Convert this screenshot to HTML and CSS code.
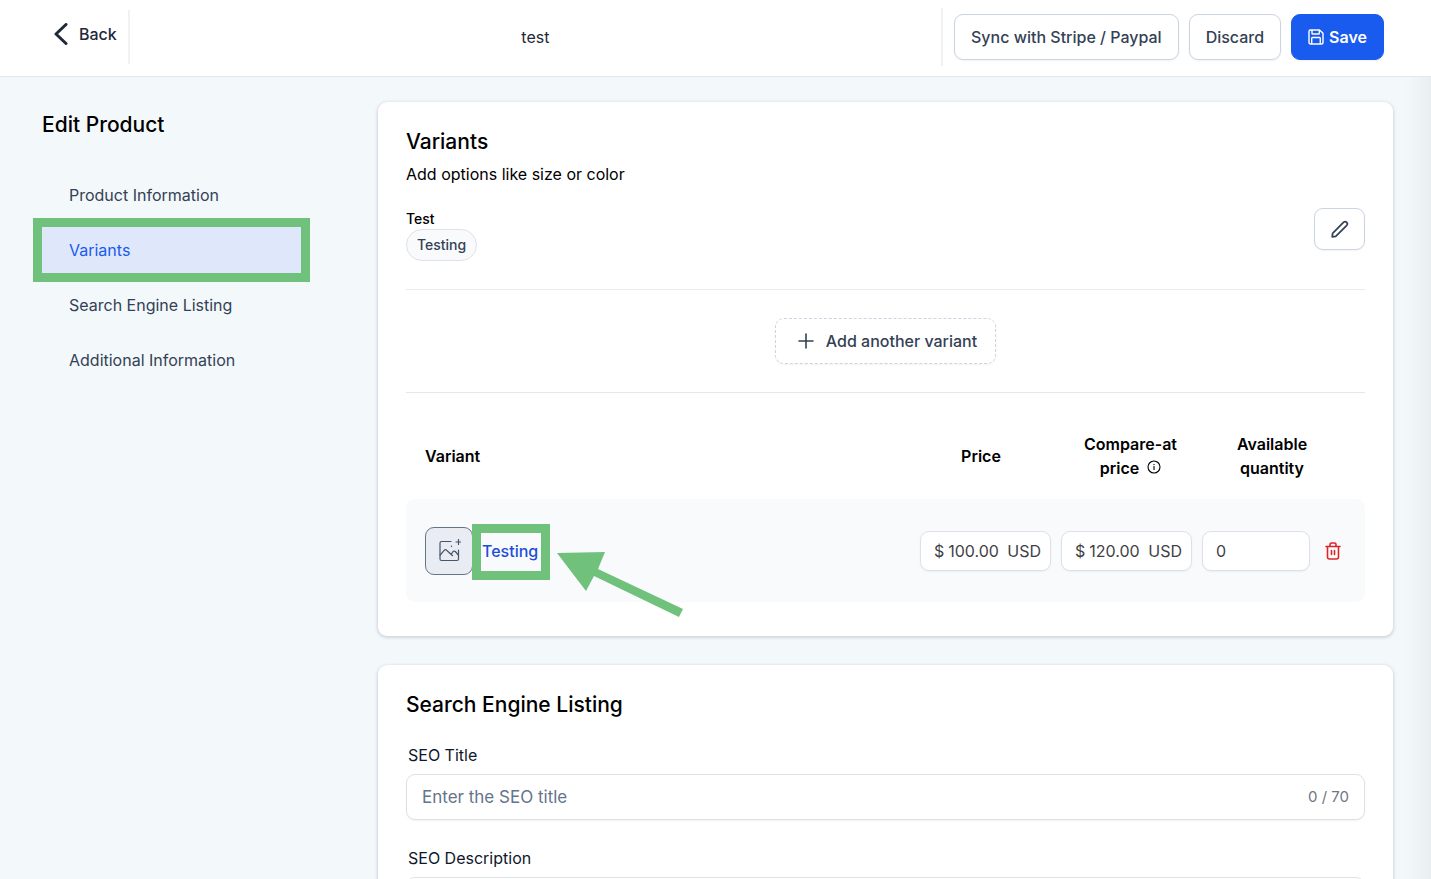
FILE: index.html
```html
<!DOCTYPE html>
<html lang="en">

<head>
  <meta charset="UTF-8">
  <meta name="viewport" content="width=device-width, initial-scale=1.0">
  <title>Edit Product</title>
  <link rel="stylesheet" href="styles.css">
</head>

<body>
  <header class="topbar">
    <a href="#" class="back-link">
      <svg width="14" height="22" viewBox="0 0 14 22" fill="none" stroke="currentColor" stroke-width="3" stroke-linecap="round" stroke-linejoin="round">
        <path d="M12 1.5L2 11l10 9.5" />
      </svg>
      Back
    </a>
    <div class="product-name">test</div>
    <div class="topbar-actions">
      <button type="button" class="btn">Sync with Stripe / Paypal</button>
      <button type="button" class="btn">Discard</button>
      <button type="button" class="btn btn-primary">
        <svg width="16" height="16" viewBox="0 0 16 16" fill="none" stroke="currentColor" stroke-width="1.4" stroke-linejoin="round">
          <path d="M2.5 1h9L15 4.200V13.500a1.500 1.500 0 0 1-1.500 1.500h-11A1.500 1.500 0 0 1 1 13.500v-11A1.500 1.500 0 0 1 2.500 1z" />
          <path d="M4 1v3.200a.8.8 0 0 0 .8.8h5.700a.8.8 0 0 0 .8-.8V1M3.700 15V9.300a.8.8 0 0 1 .8-.8h7a.8.8 0 0 1 .8.8V15" />
        </svg>
        Save
      </button>
    </div>
  </header>

  <div class="layout">
    <aside class="sidebar">
      <h1>Edit Product</h1>
      <nav class="side-nav">
        <a href="#info">Product Information</a>
        <a href="#variants" class="active">Variants</a>
        <a href="#seo">Search Engine Listing</a>
        <a href="#additional">Additional Information</a>
      </nav>
    </aside>

    <main class="content">
      <section class="card" id="variants">
        <h2>Variants</h2>
        <p class="card-hint">Add options like size or color</p>

        <div class="option-row">
          <div>
            <div class="option-name">Test</div>
            <span class="chip">Testing</span>
          </div>
          <button type="button" class="btn btn-icon" aria-label="Edit option">
            <svg width="20" height="20" viewBox="0 0 20 20" fill="none" stroke="currentColor" stroke-width="1.700" stroke-linejoin="round">
              <path d="M2.200 17.800l.4-3.500L13.700 3.200a2.200 2.200 0 0 1 3.100 3.100L5.700 17.400z" />
            </svg>
          </button>
        </div>

        <div class="add-variant">
          <button type="button" class="btn btn-dashed">
            <svg width="16" height="16" viewBox="0 0 16 16" fill="none" stroke="currentColor" stroke-width="1.600" stroke-linecap="round">
              <path d="M8 1v14M1 8h14" />
            </svg>
            Add another variant
          </button>
        </div>

        <table class="variant-table">
          <thead>
            <tr>
              <th class="col-variant">Variant</th>
              <th class="col-price">Price</th>
              <th class="col-compare">Compare-at price
                <svg class="info" width="14" height="14" viewBox="0 0 14 14" fill="none" stroke="currentColor" stroke-width="1.100">
                  <circle cx="7" cy="7" r="6" />
                  <path d="M7 6v4M7 4v1" />
                </svg>
              </th>
              <th class="col-qty">Available quantity</th>
              <th class="col-delete"></th>
            </tr>
          </thead>
          <tbody>
            <tr>
              <td class="col-variant">
                <div class="variant-cell">
                  <button type="button" class="image-btn" aria-label="Add image">
                    <svg width="24" height="24" viewBox="0 0 24 24" fill="none" stroke="currentColor" stroke-width="1.200" stroke-linecap="round" stroke-linejoin="round">
                      <path d="M14 2.500H4.500a1.500 1.500 0 0 0-1.500 1.500v16a1.500 1.500 0 0 0 1.500 1.500h15.500a1.500 1.500 0 0 0 1.500-1.500v-9" />
                      <path d="M3.200 16l4.200-4.800a1.500 1.500 0 0 1 2.200 0l6 5.500M14 15.500l2-2.800a1.500 1.500 0 0 1 2.300-.2L21.300 16M21.500.5v5M19 3h5" />
                      <path d="M14.500 7v.5" />
                    </svg>
                  </button>
                  <a href="#" class="variant-link">Testing</a>
                  <svg class="arrow" width="128" height="68" viewBox="0 0 128 68" fill="#70c17c">
                    <path d="M0 2L48 1L41 18L126 58L122 66L37 25L29 40z" />
                  </svg>
                </div>
              </td>
              <td>
                <label class="field">$<input type="text" value="100.00" aria-label="Price"><span>USD</span></label>
              </td>
              <td>
                <label class="field">$<input type="text" value="120.00" aria-label="Compare-at price"><span>USD</span></label>
              </td>
              <td>
                <label class="field"><input type="text" value="0" aria-label="Available quantity"></label>
              </td>
              <td>
                <button type="button" class="delete-btn" aria-label="Delete variant">
                  <svg width="16" height="18" viewBox="0 0 16 18" fill="none" stroke="currentColor" stroke-width="1.600" stroke-linecap="round" stroke-linejoin="round">
                    <path d="M1 4.500h14M5 4.500V2.500A1.500 1.500 0 0 1 6.500 1h3A1.500 1.500 0 0 1 11 2.500v2M2.500 4.500v10.500a2 2 0 0 0 2 2h7a2 2 0 0 0 2-2V4.500M6.500 8.500v4M9.500 8.500v4" />
                  </svg>
                </button>
              </td>
            </tr>
          </tbody>
        </table>
      </section>

      <section class="card" id="seo">
        <h2>Search Engine Listing</h2>
        <div class="form-group">
          <label for="seoTitle">SEO Title</label>
          <div class="input-box">
            <input type="text" id="seoTitle" placeholder="Enter the SEO title">
            <span class="counter">0 / 70</span>
          </div>
        </div>
        <div class="form-group">
          <label for="seoDescription">SEO Description</label>
          <textarea id="seoDescription" rows="4"></textarea>
        </div>
      </section>
    </main>
  </div>
</body>

</html>
```
FILE: styles.css
```css
* {
  box-sizing: border-box;
}

body {
  margin: 0;
  height: 100vh;
  overflow: hidden;
  display: flex;
  flex-direction: column;
  background-color: #f3f8fb;
  color: #000;
  font-family: Inter, "Liberation Sans", sans-serif;
  font-size: 16px;
  line-height: 24px;
}

button,
input,
textarea {
  font: inherit;
  color: inherit;
}

a {
  text-decoration: none;
}

svg {
  flex-shrink: 0;
}

.topbar {
  display: flex;
  align-items: center;
  flex-shrink: 0;
  height: 77px;
  padding: 0 47px 3px 54px;
  background-color: #fff;
  border-bottom: 1px solid #e2e8f0;
}

.back-link {
  display: flex;
  align-items: center;
  gap: 11px;
  height: 54px;
  padding: 0 11px 6px 0;
  border-right: 2px solid #f1f1f3;
  color: #1e293b;
  font-weight: 500;
}

.product-name {
  flex: 1;
  text-align: center;
  color: #1f2937;
}

.topbar-actions {
  display: flex;
  align-items: center;
  gap: 10px;
  height: 58px;
  padding-left: 11px;
  border-left: 2px solid #f1f1f3;
}

.btn {
  display: flex;
  align-items: center;
  justify-content: center;
  height: 46px;
  padding: 0 16px;
  background-color: #fff;
  border: 1px solid #cbd5e1;
  border-radius: 9px;
  box-shadow: 0 1px 2px rgba(0, 0, 0, 0.05);
  color: #334155;
  font-weight: 500;
  cursor: pointer;
}

.btn-primary {
  gap: 5px;
  background-color: #195bee;
  border-color: #195bee;
  color: #fff;
  font-weight: 600;
}

.btn-icon {
  width: 51px;
  height: 42px;
  padding: 0;
}

.btn-dashed {
  gap: 12px;
  padding: 0 18px 0 22px;
  border-style: dashed;
}

.layout {
  flex: 1;
  display: flex;
  min-height: 0;
  overflow: hidden;
  background: linear-gradient(to left, #e9eef1, #f3f8fb 26px);
}

.sidebar {
  width: 378px;
  flex-shrink: 0;
  padding: 33px 77px 0 42px;
}

h1,
h2 {
  margin: 0;
  font-size: 21px;
  line-height: 30px;
  font-weight: 500;
}

.side-nav {
  display: flex;
  flex-direction: column;
  gap: 9px;
  margin-top: 32px;
}

.side-nav a {
  position: relative;
  padding: 11px 27px;
  color: #334155;
}

.side-nav .active {
  background-color: #dfe7fa;
  color: #195bee;
}

.side-nav .active::after,
.variant-link::after {
  content: "";
  position: absolute;
  inset: -9px;
  border: 9px solid #70c17c;
}

.content {
  flex: 1;
  display: flex;
  flex-direction: column;
  gap: 29px;
  min-width: 0;
  padding: 25px 38px 0 0;
}

.card {
  flex-shrink: 0;
  padding: 25px 28px 34px;
  background-color: #fff;
  border-radius: 9px;
  box-shadow: 0 1px 3px 1px rgba(100, 116, 139, 0.25);
}

.card-hint {
  margin: 5px 0 22px;
}

.option-row {
  display: flex;
  justify-content: space-between;
  align-items: flex-start;
  padding-bottom: 28px;
  border-bottom: 1px solid #e8eaee;
}

.option-name {
  font-size: 14px;
  line-height: 21px;
  font-weight: 500;
}

.chip {
  display: block;
  padding: 5px 10px;
  background-color: #f9fafc;
  border: 1px solid #dfe1e8;
  border-radius: 16px;
  color: #334155;
  font-size: 14px;
  line-height: 20px;
  font-weight: 500;
}

.add-variant {
  display: flex;
  justify-content: center;
  padding: 28px 0;
  border-bottom: 1px solid #e2e8f0;
}

.variant-table {
  width: 100%;
  margin-top: 20px;
  table-layout: fixed;
  border-collapse: separate;
  border-spacing: 0;
}

.variant-table th {
  height: 86px;
  padding: 0;
  font-weight: 600;
}

.variant-table .col-variant {
  padding-left: 19px;
  text-align: left;
}

.variant-table .col-price {
  width: 141px;
  padding-right: 9px;
}

.variant-table .col-compare {
  width: 141px;
  padding: 0 16px 0 24px;
}

.variant-table .col-qty {
  width: 118px;
  padding-left: 32px;
}

.variant-table .col-delete {
  width: 50px;
}

.info {
  margin-left: 4px;
}

.variant-table td {
  height: 103px;
  padding: 0 5px;
  background-color: #f9fafc;
}

.variant-table td:first-child {
  border-radius: 9px 0 0 9px;
}

.variant-table td:last-child {
  border-radius: 0 9px 9px 0;
}

.variant-cell {
  position: relative;
  display: flex;
  align-items: center;
  gap: 8px;
}

.image-btn {
  display: flex;
  align-items: center;
  justify-content: center;
  width: 48px;
  height: 48px;
  padding: 0;
  background-color: #e9edf3;
  border: 1px solid #64748b;
  border-radius: 9px;
  color: #475569;
}

.variant-link {
  position: relative;
  padding: 7px 3px 7px 1px;
  color: #1d4ed8;
  font-weight: 500;
}

.variant-link::after {
  inset: -8px -9px -10px;
}

.arrow {
  position: absolute;
  left: 132px;
  top: 24px;
}

.field {
  display: flex;
  align-items: center;
  gap: 4px;
  height: 40px;
  padding: 0 9px 0 13px;
  background-color: #fff;
  border: 1px solid #dfe1e8;
  border-radius: 9px;
  box-shadow: 0 1px 2px rgba(0, 0, 0, 0.05);
  color: #3f3f46;
}

.field input,
.input-box input {
  flex: 1;
  min-width: 0;
  padding: 0;
  background: none;
  border: none;
  outline: none;
}

.delete-btn {
  display: flex;
  padding: 5px;
  background: none;
  border: none;
  color: #dc2626;
  cursor: pointer;
}

.form-group {
  margin-top: 23px;
}

.form-group + .form-group {
  margin-top: 26px;
}

.form-group label {
  display: block;
  padding-left: 2px;
  margin-bottom: 7px;
  color: #0f172a;
}

.input-box,
.form-group textarea {
  display: flex;
  align-items: center;
  width: 100%;
  height: 46px;
  padding: 0 15px;
  background-color: #fff;
  border: 1px solid #dfe1e8;
  border-radius: 9px;
  box-shadow: 0 1px 2px rgba(0, 0, 0, 0.05);
}

.form-group textarea {
  height: 120px;
}

.input-box input {
  font-size: 17px;
}

.input-box input::placeholder {
  color: #64748b;
}

.counter {
  color: #71767f;
  font-size: 15px;
}
```
